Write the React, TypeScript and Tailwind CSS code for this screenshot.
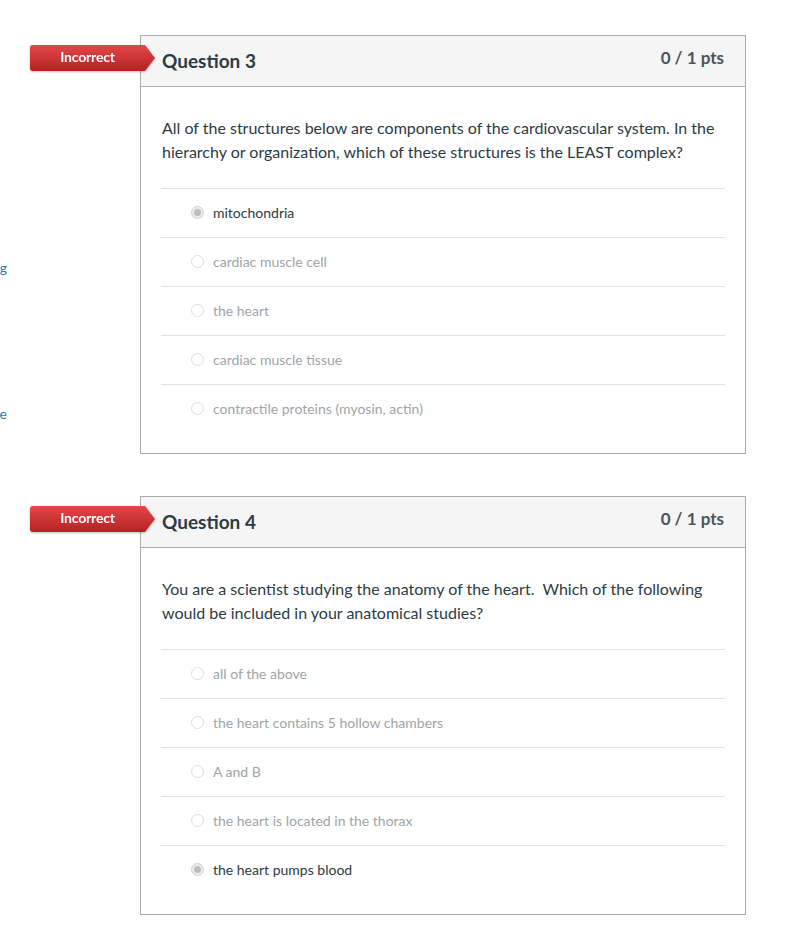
import React from "react";

type Answer = { text: string; selected?: boolean };

type Question = {
  title: string;
  points: string;
  prompt: string[];
  answers: Answer[];
};

const questions: Question[] = [
  {
    title: "Question 3",
    points: "0 / 1 pts",
    prompt: [
      "All of the structures below are components of the cardiovascular system. In the",
      "hierarchy or organization, which of these structures is the LEAST complex?",
    ],
    answers: [
      { text: "mitochondria", selected: true },
      { text: "cardiac muscle cell" },
      { text: "the heart" },
      { text: "cardiac muscle tissue" },
      { text: "contractile proteins (myosin, actin)" },
    ],
  },
  {
    title: "Question 4",
    points: "0 / 1 pts",
    prompt: [
      "You are a scientist studying the anatomy of the heart.  Which of the following",
      "would be included in your anatomical studies?",
    ],
    answers: [
      { text: "all of the above" },
      { text: "the heart contains 5 hollow chambers" },
      { text: "A and B" },
      { text: "the heart is located in the thorax" },
      { text: "the heart pumps blood", selected: true },
    ],
  },
];

function Badge() {
  return (
    <div className="relative z-10 mt-[10px] flex h-[26px] w-[125px] shrink-0 drop-shadow-[0_1px_1px_rgba(0,0,0,0.25)]">
      <div className="flex h-full w-[115px] items-center justify-center rounded-l-[3px] bg-gradient-to-b from-[#e4474a] to-[#b42121] pb-[3px] text-[14px] font-bold tracking-[-0.2px] text-white">
        Incorrect
      </div>
      <div className="h-full w-[10px] bg-gradient-to-b from-[#e4474a] to-[#b42121] [clip-path:polygon(0_0,100%_50%,0_100%)]" />
    </div>
  );
}

function Radio({ selected }: { selected?: boolean }) {
  if (selected) {
    return (
      <span className="flex h-[13px] w-[13px] items-center justify-center rounded-full border border-[#d2d2d2] bg-[#ececec]">
        <span className="h-[7px] w-[7px] rounded-full bg-[#bdbdbd]" />
      </span>
    );
  }
  return <span className="h-[13px] w-[13px] rounded-full border border-[#dedede] bg-white" />;
}

function QuestionCard({ q }: { q: Question }) {
  return (
    <div className="flex items-start">
      <Badge />
      <div className="-ml-[15px] w-[606px] border border-[#ababab] bg-white">
        <div className="flex h-[51px] items-start justify-between border-b border-[#ababab] bg-[#f5f5f5] px-[21px]">
          <h2 className="mt-[12px] text-[19px] leading-[26px] font-bold text-[#2d3b45]">{q.title}</h2>
          <span className="mt-[11px] text-[17px] leading-[22px] font-bold text-[#4a555c]">{q.points}</span>
        </div>
        <div className="px-[20px] pt-[29px] pb-[19px]">
          <div className="pl-[1px] text-[16px] leading-[24px] text-[#2d3b45]">
            {q.prompt.map((line) => (
              <p key={line} className="whitespace-pre">
                {line}
              </p>
            ))}
          </div>
          <div className="mt-[24px] border-t border-[#e3e3e3]">
            {q.answers.map((a, i) => (
              <div
                key={a.text}
                className={`flex h-[49px] items-center gap-[9px] pb-[2px] pl-[30px] ${
                  i < q.answers.length - 1 ? "border-b border-[#e3e3e3]" : ""
                }`}
              >
                <Radio selected={a.selected} />
                <span className={`text-[14px] ${a.selected ? "text-[#2d3b45]" : "text-[#a0a5a9]"}`}>{a.text}</span>
              </div>
            ))}
          </div>
        </div>
      </div>
    </div>
  );
}

export default function App() {
  return (
    <div className="flex min-h-[937px] bg-white font-['Lato','Noto_Sans',sans-serif]">
      <div className="w-[7px] shrink-0 overflow-hidden text-[14px] text-[#2b7abc]">
        <div className="mt-[257px] flex justify-end whitespace-nowrap">Viewing</div>
        <div className="mt-[125px] flex justify-end whitespace-nowrap">Module</div>
      </div>
      <div className="ml-[23px] flex flex-col gap-[42px] pt-[35px]">
        {questions.map((q) => (
          <QuestionCard key={q.title} q={q} />
        ))}
      </div>
    </div>
  );
}
